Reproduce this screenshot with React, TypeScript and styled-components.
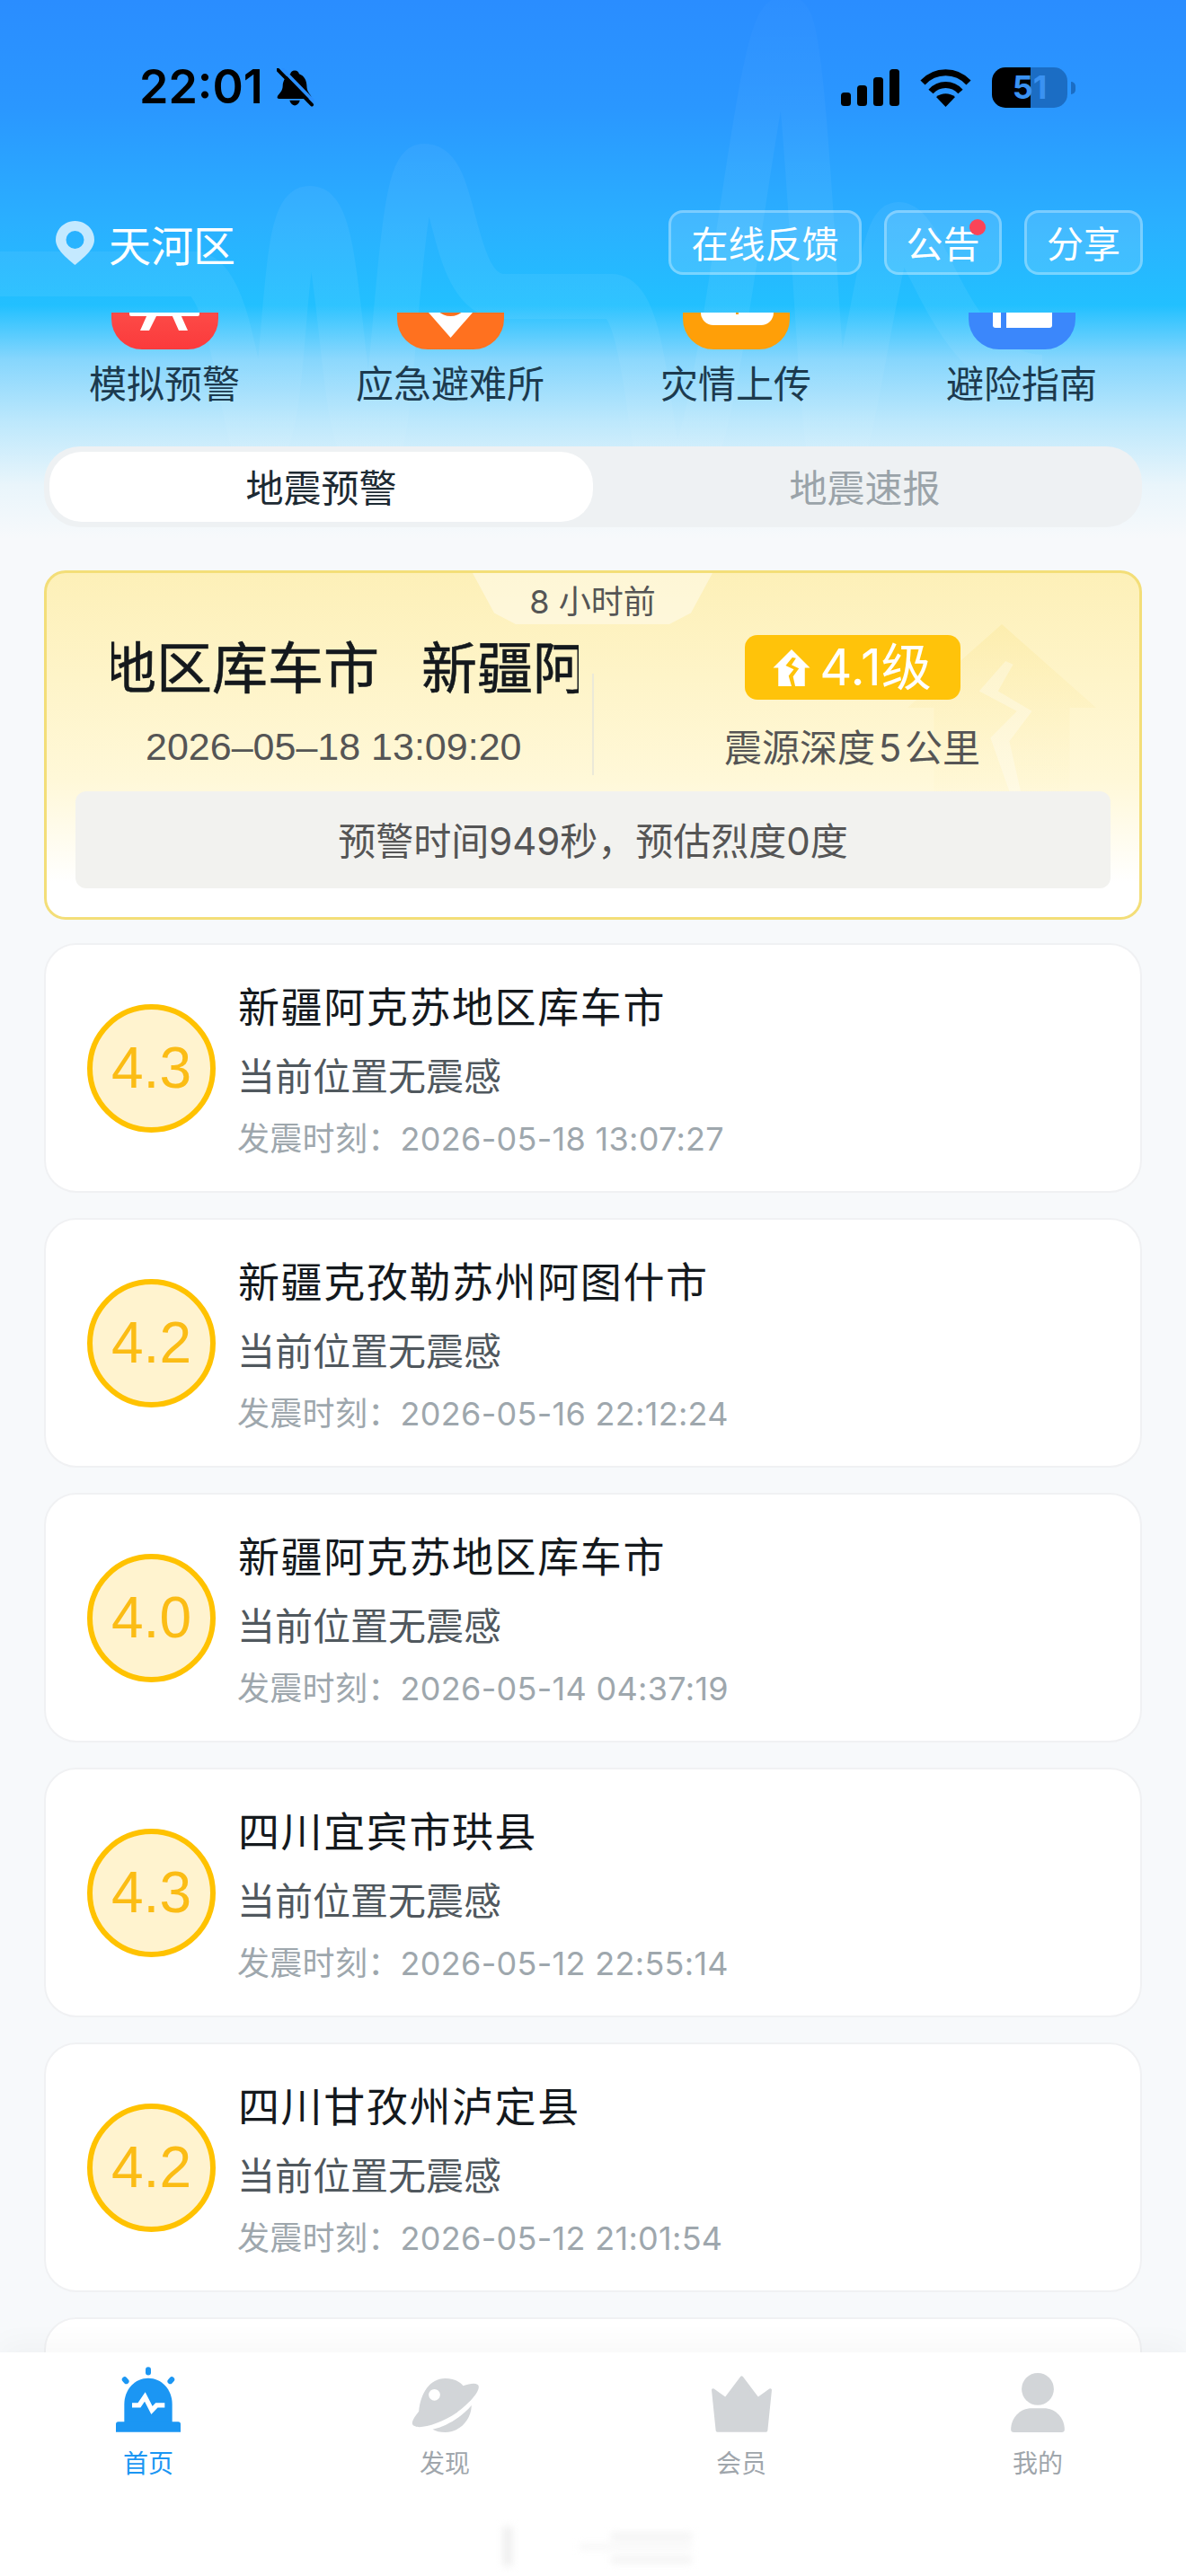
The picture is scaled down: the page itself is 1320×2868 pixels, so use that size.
import React from "react";
import styled, { createGlobalStyle } from "styled-components";

const GlobalStyle = createGlobalStyle`
  html, body {
    margin: 0;
    padding: 0;
    background: #f7f9fb;
  }
  * {
    box-sizing: border-box;
  }
`;

const quakes = [
  { mag: "4.3", place: "新疆阿克苏地区库车市", time: "2026-05-18 13:07:27" },
  { mag: "4.2", place: "新疆克孜勒苏州阿图什市", time: "2026-05-16 22:12:24" },
  { mag: "4.0", place: "新疆阿克苏地区库车市", time: "2026-05-14 04:37:19" },
  { mag: "4.3", place: "四川宜宾市珙县", time: "2026-05-12 22:55:14" },
  { mag: "4.2", place: "四川甘孜州泸定县", time: "2026-05-12 21:01:54" },
];

const HOUSE = "M50 0 L100 50 H86 V100 H14 V50 H0 Z";

const RedIcon = () => (
  <svg width="119" height="119" viewBox="0 0 119 119">
    <defs>
      <linearGradient id="redFill" x1="0" y1="0" x2="0" y2="1">
        <stop offset="0" stopColor="#ff6a5c" />
        <stop offset="1" stopColor="#fb3a3c" />
      </linearGradient>
    </defs>
    <rect width="119" height="119" rx="34" fill="url(#redFill)" />
    <rect x="20" y="60" width="78" height="22" rx="2" fill="#fff" />
    <path d="M40 80 H51 L42 98 H32 Z M67 80 H77 L85 98 H75 Z" fill="#fff" />
  </svg>
);

const OrangeIcon = () => (
  <svg width="119" height="119" viewBox="0 0 119 119">
    <rect width="119" height="119" rx="34" fill="#ff711f" />
    <path d="M59.5 106 L28 70 C20 40 40 24 59.5 24 C79 24 99 40 91 70 Z" fill="#fff" />
    <circle cx="59.5" cy="62" r="20" fill="#ff711f" />
  </svg>
);

const AmberIcon = () => (
  <svg width="119" height="119" viewBox="0 0 119 119">
    <rect width="119" height="119" rx="34" fill="#ff9f08" />
    <rect x="20" y="30" width="81" height="62" rx="14" fill="#fff" />
    <rect x="59" y="60" width="3" height="20" fill="#ff9f08" />
  </svg>
);

const BlueIcon = () => (
  <svg width="119" height="119" viewBox="0 0 119 119">
    <rect width="119" height="119" rx="34" fill="#3b87fb" />
    <path d="M27 30 H36 V95 H30 Q27 95 27 92 Z" fill="#fff" />
    <path d="M42 30 H93 V92 Q93 95 90 95 H42 Z" fill="#fff" />
  </svg>
);

const shortcuts = [
  { label: "模拟预警", icon: <RedIcon /> },
  { label: "应急避难所", icon: <OrangeIcon /> },
  { label: "灾情上传", icon: <AmberIcon /> },
  { label: "避险指南", icon: <BlueIcon /> },
];

const App = () => {
  return (
    <Page>
      <GlobalStyle />
      <Wave width="1320" height="620" viewBox="0 0 1320 620">
        <defs>
          <linearGradient id="waveFade" x1="0" y1="0" x2="0" y2="620" gradientUnits="userSpaceOnUse">
            <stop offset="0" stopColor="#fff" stopOpacity="0.015" />
            <stop offset="0.3" stopColor="#fff" stopOpacity="0.05" />
            <stop offset="0.55" stopColor="#fff" stopOpacity="0.06" />
            <stop offset="0.85" stopColor="#fff" stopOpacity="0.03" />
            <stop offset="1" stopColor="#fff" stopOpacity="0" />
          </linearGradient>
        </defs>
        <path
          d="M-20 305 H215 C265 305 270 520 292 500 C322 460 310 232 345 232 C385 232 375 510 415 510 C440 510 440 185 472 185 C510 185 500 330 560 330 H680 C730 330 720 600 760 540 C810 470 840 20 875 20 C900 20 910 500 930 540 C960 440 980 250 1000 250 C1030 250 1060 420 1160 420"
          fill="none"
          stroke="url(#waveFade)"
          strokeWidth="50"
          strokeLinejoin="round"
        />
      </Wave>

      <StatusBar>
        <Clock>
          <Time>22:01</Time>
          <svg width="42" height="43" viewBox="0 0 44 44">
            <path
              d="M21 2 C24 2 26 4 26 6 C32 8 35 14 35 20 C35 26 38 29 40 32 C41 34 40 35 38 35 H3 C1 35 0 34 1 32 C3 29 7 26 7 20 C7 14 11 8 16 6 C16 4 18 2 21 2 Z"
              fill="#000"
            />
            <path d="M15 37 H27 C26 41 23 43 21 43 C19 43 16 41 15 37 Z" fill="#000" />
            <line x1="6" y1="0" x2="44" y2="39" stroke="#2a8fff" strokeWidth="4" />
            <line x1="1" y1="1" x2="41" y2="42" stroke="#000" strokeWidth="4" strokeLinecap="round" />
          </svg>
        </Clock>
        <StatusIcons>
          <svg width="65" height="41" viewBox="0 0 65 41">
            <rect x="0" y="26" width="11" height="15" rx="3.5" fill="#000" />
            <rect x="18" y="18" width="11" height="23" rx="3.5" fill="#000" />
            <rect x="36" y="9" width="11" height="32" rx="3.5" fill="#000" />
            <rect x="54" y="0" width="11" height="41" rx="3.5" fill="#000" />
          </svg>
          <svg width="57" height="42" viewBox="0 0 57 42">
            <path d="M3 15 C17 0 40 0 54 15" fill="none" stroke="#000" strokeWidth="7" />
            <path d="M12 25 C21 15 36 15 45 25" fill="none" stroke="#000" strokeWidth="7" />
            <path d="M28.5 42 L18 31 C24 26 33 26 39 31 Z" fill="#000" />
          </svg>
          <Battery>
            <BatteryText>51</BatteryText>
          </Battery>
          <BatteryNub />
        </StatusIcons>
      </StatusBar>

      <LocationRow>
        <Place>
          <svg width="43" height="49" viewBox="0 0 43 49">
            <path
              fillRule="evenodd"
              d="M21.5 0 C33 0 43 9 43 21 C43 32 30 42 21.5 49 C13 42 0 32 0 21 C0 9 10 0 21.5 0 Z M21.5 11 A10 10 0 1 0 21.5 31 A10 10 0 1 0 21.5 11 Z"
              fill="#c4e9ff"
            />
          </svg>
          <PlaceName>天河区</PlaceName>
        </Place>
        <Actions>
          <ActionButton $w={215}>在线反馈</ActionButton>
          <ActionButton $w={131}>
            公告
            <RedDot />
          </ActionButton>
          <ActionButton $w={132}>分享</ActionButton>
        </Actions>
      </LocationRow>

      <ScrollArea>
        <Content>
          <IconGrid>
            {shortcuts.map((s) => (
              <Shortcut key={s.label}>
                {s.icon}
                <ShortcutLabel>{s.label}</ShortcutLabel>
              </Shortcut>
            ))}
          </IconGrid>

          <Tabs>
            <Tab $active>地震预警</Tab>
            <Tab>地震速报</Tab>
          </Tabs>

          <AlertCard>
            <AlertWatermark width="210" height="186" viewBox="0 0 100 100" preserveAspectRatio="none">
              <defs>
                <linearGradient id="houseFade" x1="0" y1="0" x2="0" y2="1">
                  <stop offset="0" stopColor="#fbe58f" stopOpacity="0.35" />
                  <stop offset="1" stopColor="#fdf0bd" stopOpacity="0.1" />
                </linearGradient>
              </defs>
              <path d={HOUSE} fill="url(#houseFade)" />
              <path d="M52 22 L38 40 L58 52 L44 68 L54 100 H60 L54 70 L66 52 L48 40 L56 24 Z" fill="#fff" opacity="0.3" />
            </AlertWatermark>
            <TimeTab>8 小时前</TimeTab>
            <AlertTop>
              <AlertLeft>
                <Marquee>
                  <MarqueeText>
                    <span>新疆阿克苏地区库车市</span>
                    <span>新疆阿克苏地区库车市</span>
                  </MarqueeText>
                </Marquee>
                <AlertDate>2026–05–18 13:09:20</AlertDate>
              </AlertLeft>
              <Divider />
              <AlertRight>
                <Badge>
                  <svg width="42" height="41" viewBox="0 0 100 100">
                    <path d={HOUSE} fill="#fff" />
                    <path d="M52 22 L34 44 L56 54 L42 72 L50 100 H60 L54 74 L70 52 L50 42 L62 24 Z" fill="#ffc30a" />
                  </svg>
                  <BadgeText>4.1级</BadgeText>
                </Badge>
                <Depth>震源深度{"\u200A"}5{"\u200A"}公里</Depth>
              </AlertRight>
            </AlertTop>
            <AlertBar>预警时间949秒，预估烈度0度</AlertBar>
          </AlertCard>

          <QuakeList>
            {quakes.map((q, i) => (
              <QuakeCard key={i}>
                <MagCircle>{q.mag}</MagCircle>
                <QuakeInfo>
                  <QuakeTitle>{q.place}</QuakeTitle>
                  <QuakeFelt>当前位置无震感</QuakeFelt>
                  <QuakeTime>发震时刻：{q.time}</QuakeTime>
                </QuakeInfo>
              </QuakeCard>
            ))}
            <QuakeCard />
          </QuakeList>
        </Content>
      </ScrollArea>

      <TabBar>
        <TabItem>
          <TabIcon>
            <svg width="72" height="73" viewBox="0 0 216 218">
              <path d="M28 190 V125 C28 75 64 38 108 38 C152 38 188 75 188 125 V190 Z" fill="#1b96f3" />
              <path d="M8 183 H208 Q216 183 216 191 V218 H0 V191 Q0 183 8 183 Z" fill="#1b96f3" />
              <rect x="99" y="0" width="18" height="28" rx="9" fill="#1b96f3" />
              <rect x="23" y="32" width="18" height="26" rx="9" transform="rotate(-42 32 45)" fill="#1b96f3" />
              <rect x="175" y="32" width="18" height="26" rx="9" transform="rotate(42 184 45)" fill="#1b96f3" />
              <path d="M54 128 H78 L97 100 L120 145 L136 128 H163" fill="none" stroke="#fff" strokeWidth="16" />
            </svg>
          </TabIcon>
          <TabLabel $active>首页</TabLabel>
        </TabItem>
        <TabItem>
          <TabIcon>
            <svg width="75" height="60" viewBox="0 0 224 180">
              <path
                d="M12 160 C-5 155 0 140 24 110 C30 50 60 0 112 0 C140 0 160 10 172 25 C200 14 224 14 224 28 C224 50 190 85 150 115 C100 150 30 170 12 160 Z"
                fill="#d2d5d8"
              />
              <path d="M200 90 C198 145 155 180 112 180 C95 180 80 176 70 170 C120 160 170 125 200 90 Z" fill="#d2d5d8" />
              <circle cx="76" cy="55" r="19" fill="#fff" />
            </svg>
          </TabIcon>
          <TabLabel>发现</TabLabel>
        </TabItem>
        <TabItem>
          <TabIcon>
            <svg width="69" height="63" viewBox="0 0 208 190">
              <path
                d="M8 48 L50 78 L104 6 L158 78 L200 48 L186 184 H22 Z"
                fill="#d2d5d8"
                stroke="#d2d5d8"
                strokeWidth="10"
                strokeLinejoin="round"
              />
            </svg>
          </TabIcon>
          <TabLabel>会员</TabLabel>
        </TabItem>
        <TabItem>
          <TabIcon>
            <svg width="60" height="66" viewBox="0 0 180 199">
              <circle cx="90" cy="54" r="54" fill="#d2d5d8" />
              <path d="M0 190 C0 150 30 118 70 118 H110 C150 118 180 150 180 190 Q180 199 170 199 H10 Q0 199 0 190 Z" fill="#d2d5d8" />
            </svg>
          </TabIcon>
          <TabLabel>我的</TabLabel>
        </TabItem>
        <Smudge width="215" height="44" viewBox="0 0 215 44">
          <rect x="5" y="0" width="10" height="44" fill="#eeeeee" />
          <rect x="125" y="8" width="90" height="6" fill="#efefef" />
          <rect x="90" y="20" width="125" height="5" fill="#f4f4f4" />
          <rect x="125" y="34" width="90" height="6" fill="#efefef" />
        </Smudge>
      </TabBar>
    </Page>
  );
};

export default App;

const FONT = `Inter, "Noto Sans CJK SC", sans-serif`;

const Page = styled.div`
  position: relative;
  width: 1320px;
  height: 2868px;
  overflow: hidden;
  display: flex;
  flex-direction: column;
  font-family: ${FONT};
  background: linear-gradient(
    180deg,
    #2a8dff 0,
    #2a97ff 120px,
    #2ab0ff 250px,
    #22c0ff 340px,
    #86d6fd 400px,
    #bde8fc 470px,
    #e9f5fb 540px,
    #f7f9fb 600px
  );
`;

const Wave = styled.svg`
  position: absolute;
  top: 0;
  left: 0;
`;

const StatusBar = styled.div`
  position: relative;
  height: 234px;
  flex-shrink: 0;
  display: flex;
  justify-content: space-between;
  align-items: flex-start;
  padding: 75px 123px 0 155px;
`;

const Clock = styled.div`
  display: flex;
  align-items: center;
  gap: 15px;
`;

const Time = styled.div`
  font-size: 52px;
  line-height: 44px;
  font-weight: 600;
  color: #000;
`;

const StatusIcons = styled.div`
  display: flex;
  align-items: center;
  gap: 23px;
  position: relative;
`;

const Battery = styled.div`
  width: 84px;
  height: 45px;
  border-radius: 15px;
  background: linear-gradient(90deg, #000 0, #000 43px, #1b6dc4 43px, #1b6dc4 100%);
  display: flex;
  align-items: center;
  justify-content: center;
`;

const BatteryText = styled.div`
  font-size: 36px;
  line-height: 45px;
  font-weight: 700;
  color: #3a92f2;
`;

const BatteryNub = styled.div`
  width: 5px;
  height: 14px;
  margin-left: -19px;
  border-radius: 0 6px 6px 0;
  background: #1b6dc4;
`;

const LocationRow = styled.div`
  position: relative;
  height: 114px;
  flex-shrink: 0;
  display: flex;
  justify-content: space-between;
  align-items: flex-start;
  padding: 0 48px 0 62px;
`;

const Place = styled.div`
  display: flex;
  align-items: center;
  gap: 16px;
  height: 72px;
`;

const PlaceName = styled.div`
  font-size: 47px;
  color: #fff;
`;

const Actions = styled.div`
  display: flex;
  gap: 25px;
`;

const ActionButton = styled.div<{ $w: number }>`
  position: relative;
  width: ${(p) => p.$w}px;
  height: 72px;
  display: flex;
  align-items: center;
  justify-content: center;
  padding-bottom: 2px;
  font-size: 41px;
  color: #fff;
  background: rgba(255, 255, 255, 0.12);
  border: 3px solid rgba(255, 255, 255, 0.3);
  border-radius: 16px;
`;

const RedDot = styled.span`
  position: absolute;
  top: 7px;
  right: 15px;
  width: 18px;
  height: 18px;
  border-radius: 50%;
  background: #fb4458;
`;

const ScrollArea = styled.div`
  position: relative;
  flex: 1;
  min-height: 0;
  overflow: hidden;
`;

const Content = styled.div`
  margin-top: -78px;
`;

const IconGrid = styled.div`
  display: grid;
  grid-template-columns: repeat(4, 318px);
  margin: 0 24px;
`;

const Shortcut = styled.div`
  display: flex;
  flex-direction: column;
  align-items: center;
  gap: 9px;
`;

const ShortcutLabel = styled.div`
  font-size: 42px;
  line-height: 60px;
  color: #1c3a4e;
`;

const Tabs = styled.div`
  display: flex;
  height: 90px;
  margin: 39px 49px 0 49px;
  padding: 6px;
  background: #eef1f3;
  border-radius: 40px;
`;

const Tab = styled.div<{ $active?: boolean }>`
  flex: 1;
  display: flex;
  align-items: center;
  justify-content: center;
  padding-bottom: 3px;
  font-size: 42px;
  color: ${(p) => (p.$active ? "#1d2a33" : "#9aa3a9")};
  background: ${(p) => (p.$active ? "#fff" : "transparent")};
  border-radius: 36px;
`;

const AlertCard = styled.div`
  position: relative;
  height: 389px;
  margin: 48px 49px 0;
  border: 3px solid #f3de78;
  border-radius: 24px;
  background: linear-gradient(180deg, #fdf0b8 0, #fff8d8 60%, #ffffff 90%);
  overflow: hidden;
`;

const AlertWatermark = styled.svg`
  position: absolute;
  top: 57px;
  right: 48px;
`;

const TimeTab = styled.div`
  position: absolute;
  top: 0;
  left: 474px;
  width: 267px;
  height: 57px;
  display: flex;
  align-items: center;
  justify-content: center;
  font-size: 36px;
  color: #555;
  background: rgba(255, 255, 255, 0.42);
  clip-path: polygon(0 0, 100% 0, 91% 78%, 82% 100%, 18% 100%, 9% 78%);
`;

const AlertTop = styled.div`
  position: relative;
  height: 243px;
  display: grid;
  grid-template-columns: 607px 2px 1fr;
  padding-top: 66px;
`;

const AlertLeft = styled.div`
  display: flex;
  flex-direction: column;
`;

const Marquee = styled.div`
  margin: 3px 0 0 72px;
  width: 520px;
  height: 76px;
  overflow: hidden;
`;

const MarqueeText = styled.div`
  display: flex;
  gap: 47px;
  margin-left: -322px;
  width: max-content;
  font-size: 62px;
  line-height: 76px;
  color: #14191d;
  -webkit-text-stroke: 0.6px #14191d;
`;

const AlertDate = styled.div`
  margin: 18px 0 0 110px;
  font-family: "Liberation Sans", "Noto Sans CJK SC", sans-serif;
  font-size: 43px;
  line-height: 60px;
  color: #555;
  white-space: nowrap;
`;

const Divider = styled.div`
  margin-top: 46px;
  height: 113px;
  background: #ece9d8;
`;

const AlertRight = styled.div`
  display: flex;
  flex-direction: column;
  align-items: center;
  padding-right: 32px;
`;

const Badge = styled.div`
  width: 240px;
  height: 72px;
  margin-top: 3px;
  display: flex;
  align-items: center;
  justify-content: center;
  gap: 10px;
  background: #ffc30a;
  border-radius: 14px;
`;

const BadgeText = styled.div`
  font-size: 56px;
  line-height: 72px;
  color: #fff;
`;

const Depth = styled.div`
  margin-top: 26px;
  font-size: 42px;
  line-height: 56px;
  color: #555;
  white-space: nowrap;
`;

const AlertBar = styled.div`
  position: relative;
  height: 108px;
  margin: 0 32px;
  display: flex;
  align-items: center;
  justify-content: center;
  padding-bottom: 4px;
  font-size: 42px;
  color: #555;
  background: #f2f2ef;
  border-radius: 12px;
`;

const QuakeList = styled.div`
  display: flex;
  flex-direction: column;
  gap: 28px;
  margin: 26px 49px 0;
`;

const QuakeCard = styled.div`
  height: 278px;
  flex-shrink: 0;
  display: flex;
  align-items: center;
  gap: 25px;
  padding-left: 46px;
  background: #fff;
  border: 2px solid #f0f1f3;
  border-radius: 36px;
`;

const MagCircle = styled.div`
  width: 143px;
  height: 143px;
  flex-shrink: 0;
  display: flex;
  align-items: center;
  justify-content: center;
  font-family: "Liberation Sans", sans-serif;
  font-size: 64px;
  color: #fbbc15;
  background: #fff3cf;
  border: 6px solid #ffc200;
  border-radius: 50%;
`;

const QuakeInfo = styled.div`
  align-self: flex-start;
  padding-top: 34px;
  display: flex;
  flex-direction: column;
`;

const QuakeTitle = styled.div`
  font-size: 46px;
  line-height: 70px;
  letter-spacing: 1.6px;
  color: #14191d;
`;

const QuakeFelt = styled.div`
  margin: 8px 0 0 -1px;
  font-size: 42px;
  line-height: 70px;
  color: #50585e;
`;

const QuakeTime = styled.div`
  margin-left: -1px;
  font-size: 36px;
  line-height: 68px;
  letter-spacing: 0.3px;
  color: #9ea7ad;
`;

const TabBar = styled.div`
  position: relative;
  height: 249px;
  flex-shrink: 0;
  display: grid;
  grid-template-columns: repeat(4, 330px);
  padding-top: 13px;
  background: #fff;
  box-shadow: 0 -10px 30px rgba(0, 0, 0, 0.03);
`;

const TabItem = styled.div`
  display: flex;
  flex-direction: column;
  align-items: center;
`;

const TabIcon = styled.div`
  height: 76px;
  display: flex;
  align-items: flex-end;
`;

const TabLabel = styled.div<{ $active?: boolean }>`
  margin-top: 15px;
  font-size: 28px;
  line-height: 40px;
  color: ${(p) => (p.$active ? "#1b96f3" : "#9fa6ac")};
`;

const Smudge = styled.svg`
  position: absolute;
  top: 194px;
  left: 555px;
  filter: blur(4px);
`;
